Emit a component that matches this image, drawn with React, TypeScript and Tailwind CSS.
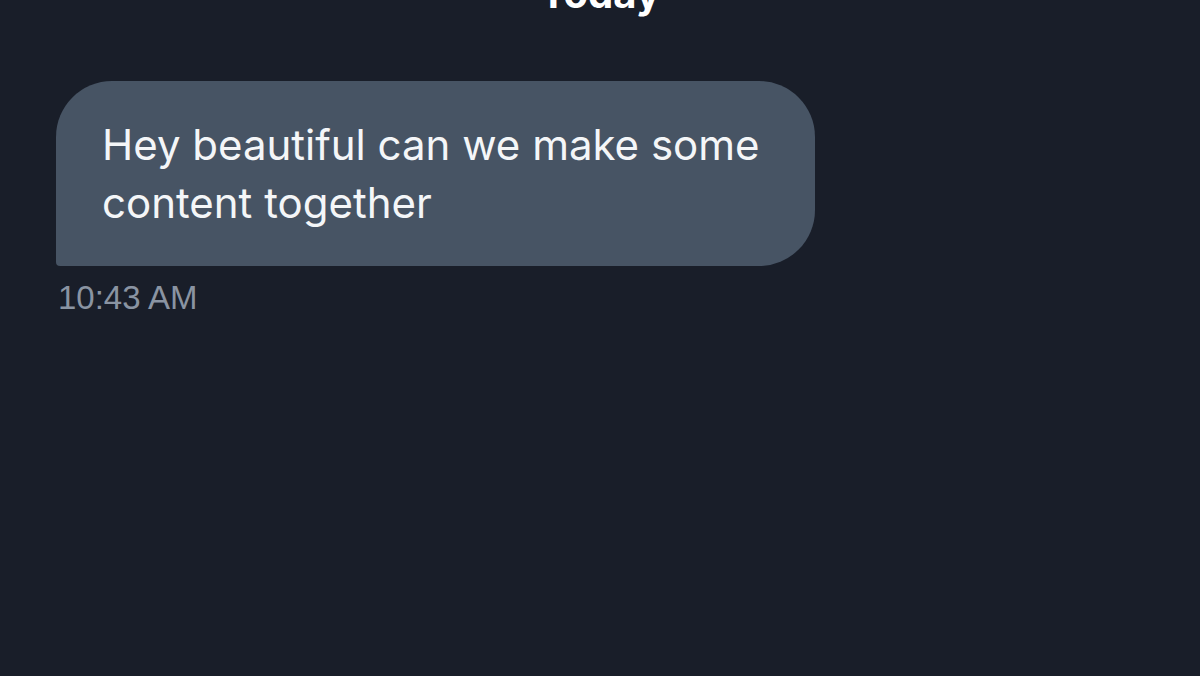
export default function App() {
  return (
    <div className="h-[676px] w-[1200px] overflow-hidden bg-[#191e29] font-['Inter',sans-serif]">
      {/* date divider, cut off at the top */}
      <div className="-mt-[30px] flex justify-center">
        <span className="text-[40px] font-bold leading-[48px] text-white">Today</span>
      </div>

      <div className="mt-[63px] pl-[56px]">
        <div className="w-[759px] rounded-bl-[4px] rounded-br-[56px] rounded-tl-[56px] rounded-tr-[56px] bg-[#475464] pb-[34px] pl-[46px] pr-[40px] pt-[35px]">
          <p className="text-[42px] leading-[58px] text-[#f4f6f8]">
            Hey beautiful can we make some content together
          </p>
        </div>
        <div className="mt-[14px] pl-[2px] font-['Liberation_Sans',sans-serif] text-[33px] leading-[36px] text-[#8a94a2]">
          10:43 AM
        </div>
      </div>
    </div>
  );
}
